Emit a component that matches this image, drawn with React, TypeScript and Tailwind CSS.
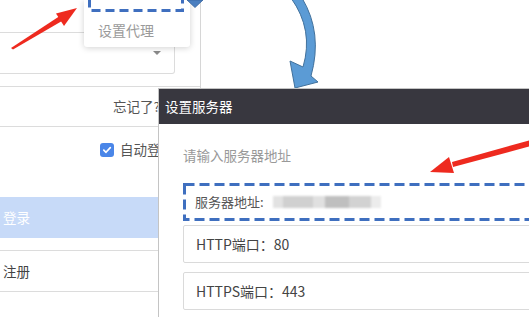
import React from "react";

const font = { fontFamily: '"Noto Sans CJK SC", "Noto Sans", sans-serif' };

export default function App() {
  return (
    <div
      className="relative h-[317px] w-[529px] overflow-hidden bg-white text-[13.5px] text-[#555]"
      style={font}
    >
      {/* Left login panel */}
      <div className="flex h-full w-[201px] flex-col border-r border-[#d6d6d6] pt-[32px]">
        <div className="flex h-[42px] w-[175px] items-center justify-end rounded-r-[3px] border border-l-0 border-[#dcdcdc] pr-[13px]">
          <div className="h-0 w-0 border-x-[4px] border-t-[4px] border-x-transparent border-t-[#8a8a8a]" />
        </div>
        <div className="mt-[12px] flex h-[41px] items-center justify-end border-y border-[#dcdcdc] pr-[40px] leading-none text-[#555]">
          忘记了?
        </div>
        <div className="mt-[16px] flex items-center gap-[6px] pl-[100px] leading-none">
          <div className="flex h-[14px] w-[14px] items-center justify-center rounded-[3px] bg-[#4a86e8]">
            <svg width="10" height="10" viewBox="0 0 10 10">
              <path d="M1.8 5.2 L4 7.3 L8.3 2.6" fill="none" stroke="white" strokeWidth="1.7" strokeLinecap="round" strokeLinejoin="round" />
            </svg>
          </div>
          <span className="text-[#555]">自动登录</span>
        </div>
        <div className="mt-[40px] flex h-[41px] items-center bg-[#c7daf8] pl-[3px] text-white">
          登录
        </div>
        <div className="mt-[12px] flex h-[42px] items-center border-y border-[#dcdcdc] pl-[3px] text-[#444]">
          注册
        </div>
      </div>

      {/* Popup menu */}
      <div className="absolute left-[84px] top-0 h-[47px] w-[106px] rounded-b-[3px] bg-white pl-[14px] pt-[20px] shadow-[0_1px_6px_rgba(0,0,0,0.18)]">
        <span className="text-[14px] leading-[20px] text-[#9a9a9a]">设置代理</span>
        <svg className="absolute left-[4px] top-[-12px]" width="96" height="24" viewBox="0 0 96 24">
          <rect x="1.5" y="1.5" width="93" height="21" fill="none" stroke="#3f6fbf" strokeWidth="3" strokeDasharray="9 5" />
        </svg>
      </div>
      <svg className="absolute left-[186px] top-0" width="18" height="9" viewBox="0 0 18 9">
        <polygon points="1,0 17,0 9,7.5" fill="#4a7fc0" stroke="#36639e" strokeWidth="0.8" />
      </svg>

      {/* Blue curved arrow */}
      <svg className="absolute left-0 top-0" width="529" height="317" viewBox="0 0 529 317" style={{ pointerEvents: "none" }}>
        <path
          d="M291 -2 Q314 30 303 67 L290 61 L295 88 L318 82 L311 76 Q323 33 302 -2 Z"
          fill="#5b9bd5"
          stroke="#41719c"
          strokeWidth="1"
        />
      </svg>

      {/* Dialog */}
      <div className="absolute left-[158px] top-[88px] flex h-[229px] w-[371px] flex-col border-l border-t border-[#c4c4c4] bg-white">
        <div className="flex h-[35px] items-center bg-[#38373f] pl-[6px] text-[13.5px] text-white">
          设置服务器
        </div>
        <div className="flex flex-col pl-[24px]">
          <div className="mt-[21px] leading-[20px] text-[#999]">请输入服务器地址</div>
          <div className="relative mt-[18px] flex h-[38px] w-[400px] items-center pl-[12px] text-[13px] text-[#555]">
            <svg className="absolute left-0 top-0" width="400" height="38" viewBox="0 0 400 38">
              <rect x="1.5" y="1.5" width="420" height="35" fill="none" stroke="#3f6fbf" strokeWidth="3" strokeDasharray="10 5" />
            </svg>
            <span>服务器地址:</span>
            <div className="ml-[9px] flex h-[12px] items-center blur-[1px]">
              <div className="h-full w-[10px] bg-[#e2e2e2]" />
              <div className="h-full w-[30px] bg-[#d0d0d0]" />
              <div className="h-full w-[12px] bg-[#e0e0e0]" />
              <div className="h-full w-[24px] bg-[#bfbfbf]" />
              <div className="h-full w-[22px] bg-[#d2d2d2]" />
              <div className="h-full w-[10px] bg-[#ececec]" />
            </div>
          </div>
          <div className="mt-[4px] flex h-[38px] w-[400px] items-center rounded-[2px] border border-[#dadada] pl-[12px] text-[14px] text-[#444]">
            HTTP端口：80
          </div>
          <div className="mt-[9px] flex h-[38px] w-[400px] items-center rounded-[2px] border border-[#dadada] pl-[12px] text-[14px] text-[#444]">
            HTTPS端口：443
          </div>
        </div>
      </div>

      {/* Red annotation arrows */}
      <svg className="absolute left-0 top-0" width="529" height="317" viewBox="0 0 529 317" style={{ pointerEvents: "none" }}>
        <polygon points="11,48 13,49.5 62,21 59,16.5" fill="#ee2a1f" />
        <polygon points="77,8 56,13.5 64,26" fill="#ee2a1f" />
        <polygon points="452,162 453,167 535,145 534,139" fill="#ee2a1f" />
        <polygon points="430,172 449,157 454,173" fill="#ee2a1f" />
      </svg>
    </div>
  );
}
